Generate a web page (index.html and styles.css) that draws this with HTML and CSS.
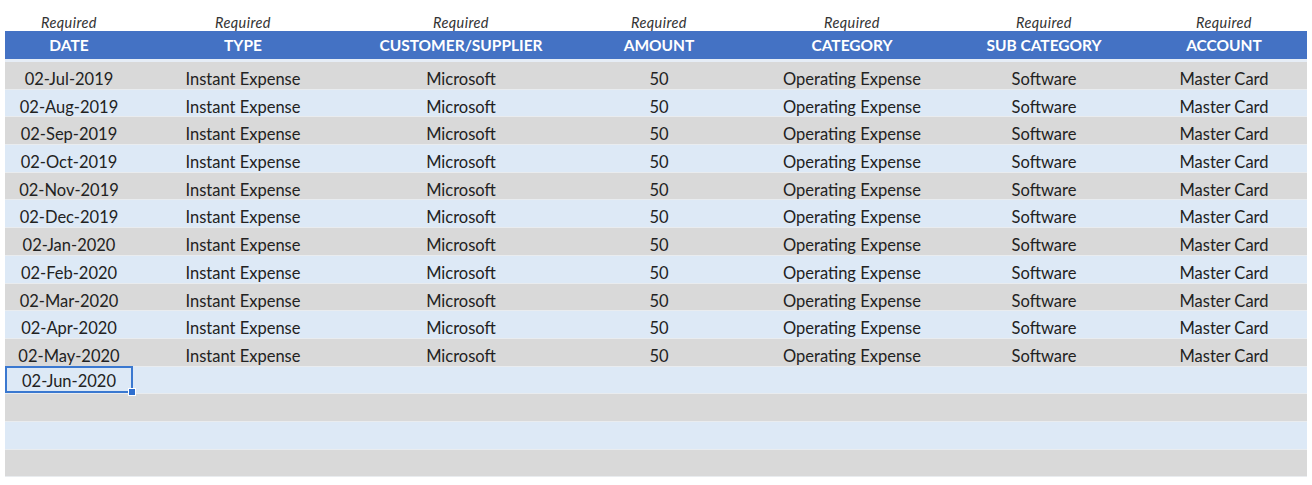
FILE: index.html
```html
<!DOCTYPE html>
<html>
<head>
<meta charset="utf-8">
<link rel="stylesheet" href="styles.css">
</head>
<body>
<div class="sheet">
  <div class="row req">
    <div>Required</div><div>Required</div><div>Required</div><div>Required</div><div>Required</div><div>Required</div><div>Required</div>
  </div>
  <div class="row head">
    <div>DATE</div><div>TYPE</div><div>CUSTOMER/SUPPLIER</div><div>AMOUNT</div><div>CATEGORY</div><div>SUB CATEGORY</div><div>ACCOUNT</div>
  </div>
  <div class="body">
    <div class="row data odd"><div>02-Jul-2019</div><div>Instant Expense</div><div>Microsoft</div><div>50</div><div>Operating Expense</div><div>Software</div><div>Master Card</div></div>
    <div class="row data even"><div>02-Aug-2019</div><div>Instant Expense</div><div>Microsoft</div><div>50</div><div>Operating Expense</div><div>Software</div><div>Master Card</div></div>
    <div class="row data odd"><div>02-Sep-2019</div><div>Instant Expense</div><div>Microsoft</div><div>50</div><div>Operating Expense</div><div>Software</div><div>Master Card</div></div>
    <div class="row data even"><div>02-Oct-2019</div><div>Instant Expense</div><div>Microsoft</div><div>50</div><div>Operating Expense</div><div>Software</div><div>Master Card</div></div>
    <div class="row data odd"><div>02-Nov-2019</div><div>Instant Expense</div><div>Microsoft</div><div>50</div><div>Operating Expense</div><div>Software</div><div>Master Card</div></div>
    <div class="row data even"><div>02-Dec-2019</div><div>Instant Expense</div><div>Microsoft</div><div>50</div><div>Operating Expense</div><div>Software</div><div>Master Card</div></div>
    <div class="row data odd"><div>02-Jan-2020</div><div>Instant Expense</div><div>Microsoft</div><div>50</div><div>Operating Expense</div><div>Software</div><div>Master Card</div></div>
    <div class="row data even"><div>02-Feb-2020</div><div>Instant Expense</div><div>Microsoft</div><div>50</div><div>Operating Expense</div><div>Software</div><div>Master Card</div></div>
    <div class="row data odd"><div>02-Mar-2020</div><div>Instant Expense</div><div>Microsoft</div><div>50</div><div>Operating Expense</div><div>Software</div><div>Master Card</div></div>
    <div class="row data even"><div>02-Apr-2020</div><div>Instant Expense</div><div>Microsoft</div><div>50</div><div>Operating Expense</div><div>Software</div><div>Master Card</div></div>
    <div class="row data odd"><div>02-May-2020</div><div>Instant Expense</div><div>Microsoft</div><div>50</div><div>Operating Expense</div><div>Software</div><div>Master Card</div></div>
    <div class="row data even"><div class="selected">02-Jun-2020<span class="handle"></span></div><div></div><div></div><div></div><div></div><div></div><div></div></div>
    <div class="row data odd"><div></div><div></div><div></div><div></div><div></div><div></div><div></div></div>
    <div class="row data even"><div></div><div></div><div></div><div></div><div></div><div></div><div></div></div>
    <div class="row data odd"><div></div><div></div><div></div><div></div><div></div><div></div><div></div></div>
  </div>
</div>
</body>
</html>
```

FILE: styles.css
```css
html, body {
  margin: 0;
  padding: 0;
  background: #ffffff;
}
.sheet {
  padding: 12px 0 0 5px;
  width: 1302px;
  font-family: Lato, "Open Sans", sans-serif;
  color: #222222;
}
.row {
  display: grid;
  grid-template-columns: 128px 220px 216px 180px 206px 178px 174px;
  align-items: center;
  text-align: center;
}
.row > div {
  white-space: nowrap;
}
.row > div:last-child {
  padding-left: 8px;
  box-sizing: border-box;
}
.req {
  height: 19px;
  font-style: italic;
  font-size: 14.5px;
  letter-spacing: 0.4px;
  color: #333333;
  padding-top: 1px;
  box-sizing: border-box;
}
.head {
  height: 28px;
  background: #4472c4;
  color: #ffffff;
  font-weight: bold;
  font-size: 15.5px;
  border-bottom: 3px solid #e6edf6;
}
.data {
  height: 27.7px;
  font-size: 16.5px;
  box-sizing: border-box;
  border-bottom: 1px solid #e9ecef;
}
.data > div {
  height: 100%;
  display: flex;
  align-items: center;
  justify-content: center;
  padding-top: 7px;
  box-sizing: border-box;
}
.odd {
  background: #d9d9d9;
}
.even {
  background: #dde9f6;
}
.data > .selected {
  position: relative;
  border: 2px solid #3a78d0;
  height: 27px;
  margin-top: -1px;
  padding-top: 4px;
}
.handle {
  position: absolute;
  right: -5px;
  bottom: -5px;
  width: 6px;
  height: 6px;
  background: #2f6fcf;
  border: 1px solid #ffffff;
}
```
